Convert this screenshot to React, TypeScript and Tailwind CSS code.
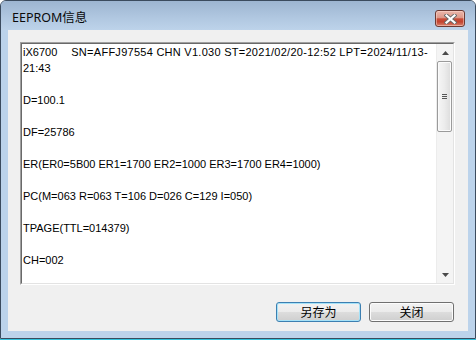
import React from "react";

const lines: string[] = [
  "21:43",
  "",
  "D=100.1",
  "",
  "DF=25786",
  "",
  "ER(ER0=5B00 ER1=1700 ER2=1000 ER3=1700 ER4=1000)",
  "",
  "PC(M=063 R=063 T=106 D=026 C=129 I=050)",
  "",
  "TPAGE(TTL=014379)",
  "",
  "CH=002",
];

function CloseButton() {
  return (
    <div className="absolute left-[434px] top-[9px] w-[30px] h-[17px] rounded-[3px] border border-[#6b3a33] bg-[linear-gradient(to_bottom,#ebb7ab_0%,#dc9788_45%,#c94d39_52%,#c2432f_72%,#d8826e_100%)] shadow-[inset_0_0_0_1px_rgba(255,220,210,0.5)] flex items-center justify-center">
      <svg width="13" height="10" viewBox="0 0 13 10">
        <path d="M2.5 1.5 L10.5 8.5 M10.5 1.5 L2.5 8.5" stroke="#6a6a6a" strokeWidth="4" strokeLinecap="square" />
        <path d="M2.5 1.5 L10.5 8.5 M10.5 1.5 L2.5 8.5" stroke="#ffffff" strokeWidth="2.2" strokeLinecap="square" />
      </svg>
    </div>
  );
}

function ScrollBar() {
  return (
    <div className="w-[17px] h-full bg-[#f4f4f4] border-l border-[#ececec] flex flex-col shrink-0">
      <div className="h-[17px] flex items-center justify-center shrink-0">
        <svg width="7" height="4" viewBox="0 0 7 4">
          <path d="M3.5 0 L7 4 L0 4 Z" fill="#4a4a4a" />
        </svg>
      </div>
      <div className="ml-[0px] mr-[1px] h-[71px] rounded-[2px] border border-[#9b9b9b] bg-[linear-gradient(to_right,#f6f6f6_0%,#ececec_50%,#dcdcdc_100%)] shadow-[inset_0_0_0_1px_#fbfbfb] flex flex-col items-center justify-center gap-[1px] shrink-0">
        <div className="w-[5px] h-px bg-[#555555]" />
        <div className="w-[5px] h-px bg-[#555555]" />
        <div className="w-[5px] h-px bg-[#555555]" />
      </div>
      <div className="flex-1" />
      <div className="h-[17px] flex items-center justify-center shrink-0">
        <svg width="7" height="4" viewBox="0 0 7 4">
          <path d="M0 0 L7 0 L3.5 4 Z" fill="#4a4a4a" />
        </svg>
      </div>
    </div>
  );
}

export default function App() {
  return (
    <div className="w-[476px] h-[340px] bg-white">
      <div className="w-[476px] h-[339px] border border-[#3b4b5e] rounded-t-[6px] bg-[#bcd3eb] flex flex-col overflow-hidden">
        <div className="relative h-[29px] shrink-0 bg-[linear-gradient(to_bottom,#9db5d1_0%,#b1c8e1_60%,#bdd3ea_100%)]">
          <div className="pl-[11px] pt-[9px] text-[12.5px] leading-[16px] text-[#0a0a0a] font-['Noto_Sans','Noto_Sans_CJK_SC',sans-serif]">
            EEPROM信息
          </div>
          <CloseButton />
        </div>
        <div className="mx-[7px] h-[301px] shrink-0 bg-[#f0f0f0] flex flex-col pt-[12px] pl-[12px]">
          <div className="w-[435px] h-[243px] border border-t-[#a0a0a0] border-l-[#a0a0a0] border-r-white border-b-white">
            <div className="w-full h-full border border-t-[#696969] border-l-[#696969] border-r-[#e3e3e3] border-b-[#e3e3e3] bg-white flex">
              <div className="flex-1 pl-[1px] text-[11px] leading-[16px] text-black font-['Liberation_Sans',Arial,sans-serif] overflow-hidden">
                <div className="h-[16px] whitespace-pre flex">
                  <span>iX6700</span>
                  <span className="w-[14px] shrink-0" />
                  <span className="tracking-[0.27px]">SN=AFFJ97554 CHN V1.030 ST=2021/02/20-12:52 LPT=2024/11/13-</span>
                </div>
                {lines.map((l, i) => (
                  <div key={i} className="h-[16px] whitespace-pre">
                    {l}
                  </div>
                ))}
              </div>
              <ScrollBar />
            </div>
          </div>
          <div className="mt-[17px] pr-[14px] flex justify-end gap-[8px]">
            <div className="w-[85px] h-[20px] rounded-[3px] border border-[#3c7fb1] bg-[linear-gradient(to_bottom,#f2f2f2_0%,#ebebeb_50%,#dddddd_50%,#cfcfcf_100%)] shadow-[inset_0_0_0_1px_#a6e2f8] flex items-center justify-center text-[12px] leading-[16px] text-black font-['Noto_Sans_CJK_SC',sans-serif]">
              另存为
            </div>
            <div className="w-[85px] h-[20px] rounded-[3px] border border-[#707070] bg-[linear-gradient(to_bottom,#f2f2f2_0%,#ebebeb_50%,#dddddd_50%,#cfcfcf_100%)] shadow-[inset_0_0_0_1px_#fcfcfc] flex items-center justify-center text-[12px] leading-[16px] text-black font-['Noto_Sans_CJK_SC',sans-serif]">
              关闭
            </div>
          </div>
        </div>
      </div>
      <div className="h-px w-[476px] bg-[#34c2dc]" />
    </div>
  );
}
